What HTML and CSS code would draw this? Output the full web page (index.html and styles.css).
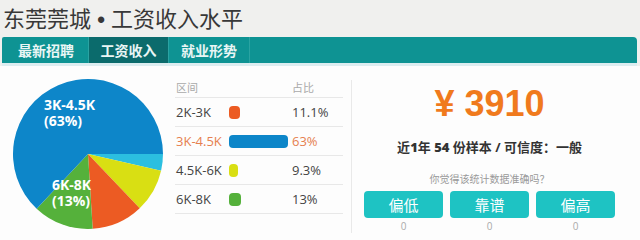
FILE: index.html
```html
<!DOCTYPE html>
<html lang="zh-CN">
<head>
  <meta charset="UTF-8">
  <title>东莞莞城 • 工资收入水平</title>
  <link rel="stylesheet" href="styles.css">
</head>
<body>

  <header class="top">
    <h1>东莞莞城<span class="dot"> • </span>工资收入水平</h1>
  </header>

  <nav class="tabs">
    <a class="tab">最新招聘</a>
    <a class="tab on">工资收入</a>
    <a class="tab">就业形势</a>
  </nav>

  <main class="board">
    <div class="pie">
      <svg width="150" height="150" viewBox="13 12 150 150">
        <path d="M88 87 L163 87 A75 75 0 0 1 161.09 103.82 Z" fill="#2bbfe0"/>
        <path d="M88 87 L161.09 103.82 A75 75 0 0 1 139.71 141.33 Z" fill="#d9df13"/>
        <path d="M88 87 L139.71 141.33 A75 75 0 0 1 92.71 161.85 Z" fill="#ec5b23"/>
        <path d="M88 87 L92.71 161.85 A75 75 0 0 1 36.66 141.68 Z" fill="#55b13b"/>
        <path d="M88 87 L36.66 141.68 A75 75 0 1 1 163 87 Z" fill="#0d86c9"/>
      </svg>
      <div class="pie-label big">3K-4.5K<br>(63%)</div>
      <div class="pie-label small">6K-8K<br>(13%)</div>
    </div>

    <table class="dist">
      <tr class="head">
        <td>区间</td>
        <td></td>
        <td>占比</td>
      </tr>
      <tr>
        <td>2K-3K</td>
        <td><span class="bar orange" style="width: 11px"></span></td>
        <td>11.1%</td>
      </tr>
      <tr class="hl">
        <td>3K-4.5K</td>
        <td><span class="bar blue" style="width: 59px"></span></td>
        <td>63%</td>
      </tr>
      <tr>
        <td>4.5K-6K</td>
        <td><span class="bar yellow" style="width: 9px"></span></td>
        <td>9.3%</td>
      </tr>
      <tr>
        <td>6K-8K</td>
        <td><span class="bar green" style="width: 12px"></span></td>
        <td>13%</td>
      </tr>
    </table>

    <div class="divider"></div>

    <section class="summary">
      <div class="price">¥ 3910</div>
      <div class="meta">近<b>1</b>年 <b>54</b> 份样本 / 可信度：一般</div>
      <div class="ask">你觉得该统计数据准确吗？</div>
      <div class="votes">
        <div class="vote"><button>偏低</button><span>0</span></div>
        <div class="vote"><button>靠谱</button><span>0</span></div>
        <div class="vote"><button>偏高</button><span>0</span></div>
      </div>
    </section>
  </main>

</body>
</html>
```

FILE: styles.css
```css
body {
  margin: 0;
  background: #f0f0ee;
  font-family: "Open Sans", "Noto Sans CJK SC", sans-serif;
  color: #333;
  overflow: hidden;
}

.top {
  height: 37px;
}

h1 {
  margin: 0;
  padding-left: 3px;
  font-size: 22px;
  font-weight: normal;
  line-height: 34px;
  color: #383838;
  font-family: "Noto Sans CJK SC", sans-serif;
}

h1 .dot {
  font-family: "Liberation Sans", sans-serif;
  font-weight: bold;
  white-space: pre;
}

.tabs {
  display: flex;
  height: 26px;
  margin: 0 3px 0 2px;
  background: #0e9393;
  border-radius: 2px 4px 0 0;
  border-bottom: 3px solid #dcedf0;
}

.tab {
  display: flex;
  align-items: center;
  justify-content: center;
  font-family: "Noto Sans CJK SC", sans-serif;
  font-size: 14px;
  font-weight: bold;
  color: #e9f6f5;
  border-right: 1px solid #2aa3a2;
}

.tab:nth-child(1) { width: 84px; padding-left: 2px; }
.tab:nth-child(2) { width: 79px; }
.tab:nth-child(3) { width: 80px; }

.tab.on {
  background: #0b6b6c;
}

.board {
  display: flex;
  height: 174px;
  background: #fdfdfd;
}

.pie {
  position: relative;
  width: 175px;
  padding: 13px 0 0 13px;
  box-sizing: border-box;
}

.pie svg {
  display: block;
}

.pie-label {
  position: absolute;
  color: #fff;
  font-family: "Open Sans", sans-serif;
  font-size: 14px;
  font-weight: bold;
  line-height: 16px;
}

.pie-label.big { left: 44px; top: 31px; }
.pie-label.small { left: 52px; top: 111px; }

.dist {
  width: 168px;
  margin-top: 10px;
  align-self: flex-start;
  border-collapse: collapse;
  font-size: 13px;
  color: #444;
}

.dist td {
  height: 28px;
  padding: 0;
  border-bottom: 1px solid #e8e8e8;
  vertical-align: middle;
}

.dist td:nth-child(1) { width: 53px; padding-left: 1px; }
.dist td:nth-child(2) { width: 63px; }

.dist .head td {
  height: 21px;
  color: #aaa;
  font-size: 11px;
}

.dist .hl td {
  color: #e6804f;
}

.bar {
  display: block;
  height: 13px;
  border-radius: 4px;
}

.orange { background: #ec5b23; }
.blue { background: #0d86c9; }
.yellow { background: #d9df13; }
.green { background: #55b13b; }

.divider {
  width: 1px;
  height: 153px;
  margin: 14px 0 0 8px;
  background: #e9e9e9;
}

.summary {
  flex: 1;
  padding-right: 13px;
  text-align: center;
}

.price {
  margin-top: 20px;
  font-family: "Liberation Sans", sans-serif;
  font-size: 36px;
  font-weight: bold;
  line-height: 36px;
  color: #f07a1d;
}

.meta {
  margin-top: 16px;
  font-size: 13px;
  font-weight: bold;
  color: #333;
  line-height: 18px;
}

.ask {
  margin-top: 16px;
  font-size: 10px;
  color: #999;
  line-height: 14px;
}

.votes {
  display: flex;
  justify-content: center;
  gap: 7px;
  margin-top: 5px;
}

.vote {
  display: flex;
  flex-direction: column;
  align-items: center;
}

.vote button {
  width: 79px;
  height: 27px;
  border: none;
  border-radius: 4px;
  background: #1ec3c3;
  color: #fff;
  font-family: "Noto Sans CJK SC", sans-serif;
  font-size: 15px;
  padding: 0;
}

.vote span {
  font-size: 10px;
  color: #aaa;
  line-height: 16px;
}
```
